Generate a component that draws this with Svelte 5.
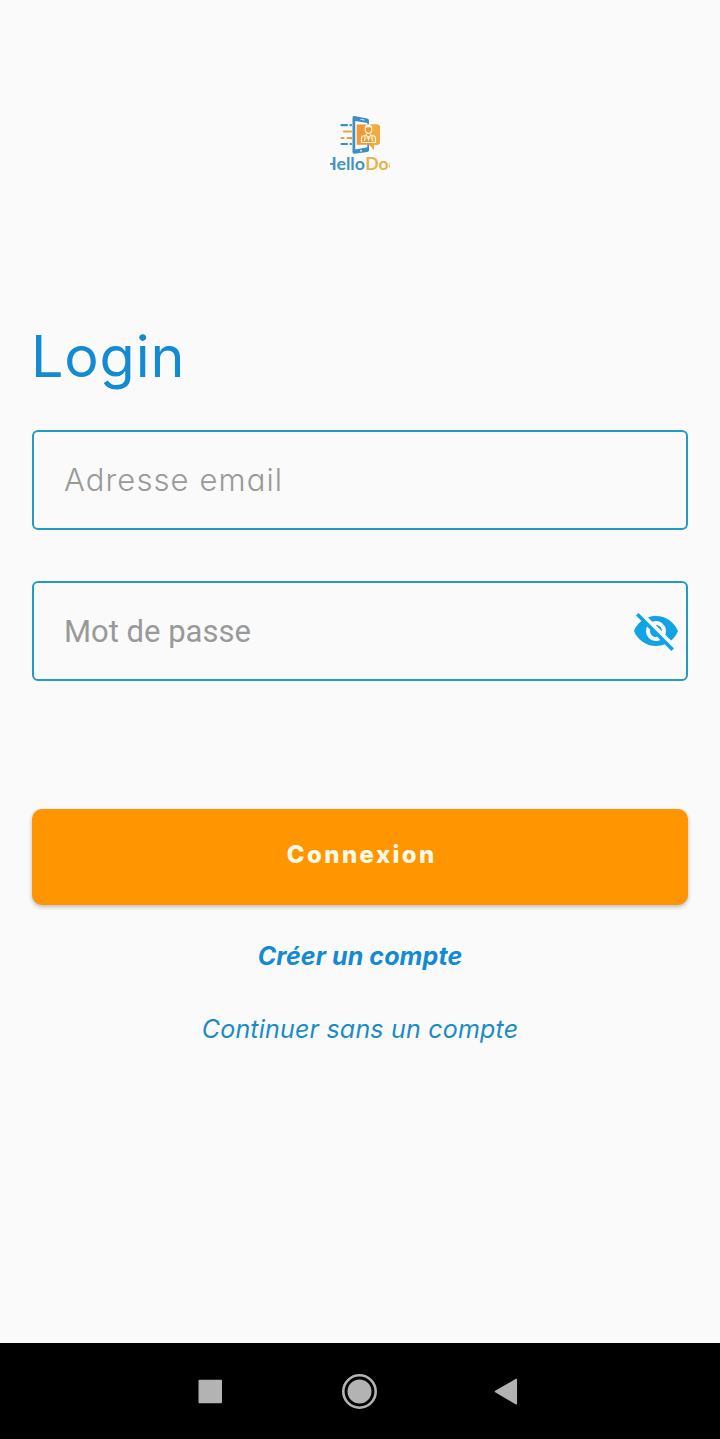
<script>
	let email = '';
	let password = '';
	let showPassword = false;

	function togglePassword() {
		showPassword = !showPassword;
	}
</script>

<div class="screen">
	<main>
		<svg class="logo" viewBox="0 0 60 60" role="img" aria-label="HelloDoc">
			<g stroke-width="2.2" stroke-linecap="round">
				<path d="M11.5 15.2h5.5M20.5 15.2h.5M11.5 34h5.5M20.5 34h.5M20.5 28.2h.5" stroke="#3d8fbd" />
				<path d="M14 21.5h7" stroke="#e3aa3c" />
				<path d="M11.5 28h2M17.5 28h3.5" stroke="#ee9b4a" />
			</g>
			<path d="M22.5 7.6Q22.5 5.8 24.5 6.1L37.2 8.5Q39 8.9 39 10.8V40.2Q39 41.7 37.2 42L24.5 43.8Q22.5 44 22.5 42Z" fill="#3c8fc1" />
			<path d="M25.2 11L37.3 13V37.3L25.2 39.5Z" fill="#fafafa" />
			<path d="M30.5 9.3l4 .8" stroke="#d7edf5" stroke-width="1" />
			<circle cx="31" cy="40.8" r="1" fill="#d7edf5" />
			<path d="M26.7 14.4H47Q49.8 14.4 49.8 17V31.8Q49.8 34.7 47 34.7H44V40L39.2 34.7H26.7Z" fill="#f2983c" />
			<path d="M44 14.4h3q2.8 0 2.8 2.6v14.8q0 2.9-2.8 2.9h-3V40l-3-3.4V14.4z" fill="#efad3d" />
			<g fill="none" stroke="#fff5d8" stroke-width="1.2">
				<path d="M35.3 18q0-3 3.2-3t3.2 3v2.5q-.7 3-3.2 3t-3.2-3z" />
				<path d="M31.5 32.5v-4q0-2.7 3-3l1.8-.7 2.2 5 2.2-5 1.8.7q3 .3 3 3v4zM35 26v3l-1 2M42 26v3l1 2M38.5 26v4" />
			</g>
			<path d="M35.2 18q-.5-3.6 3.3-3.6t3.3 3.6q-3-1.5-6.6 0z" fill="#fff5d8" />
			<text class="logo-text">
				<tspan class="hello" x="-7" y="59.6" textLength="42" lengthAdjust="spacingAndGlyphs">Hello</tspan><tspan class="doc" x="35.3" y="59.6" textLength="32" lengthAdjust="spacingAndGlyphs">Doc</tspan>
			</text>
		</svg>

		<h1>Login</h1>

		<form on:submit|preventDefault>
			<div class="field">
				<input class="email" type="email" placeholder="Adresse email" bind:value={email} />
			</div>

			<div class="field">
				{#if showPassword}
					<input type="text" placeholder="Mot de passe" bind:value={password} />
				{:else}
					<input type="password" placeholder="Mot de passe" bind:value={password} />
				{/if}
				<button class="eye" type="button" aria-label="Afficher le mot de passe" on:click={togglePassword}>
					<svg viewBox="0 0 24 24" width="48" height="48" fill="#11a3e6">
						<path d="M12 7c2.76 0 5 2.24 5 5 0 .65-.13 1.26-.36 1.83l2.92 2.92c1.51-1.26 2.7-2.89 3.43-4.75-1.73-4.39-6-7.5-11-7.5-1.4 0-2.74.25-3.98.7l2.16 2.16C10.74 7.13 11.35 7 12 7zM2 4.27l2.28 2.28.46.46C3.08 8.3 1.78 10.02 1 12c1.73 4.39 6 7.5 11 7.5 1.55 0 3.03-.3 4.38-.84l.42.42L19.73 22 21 20.73 3.27 3 2 4.27zM7.53 9.8l1.55 1.55c-.05.21-.08.43-.08.65 0 1.66 1.34 3 3 3 .22 0 .44-.03.65-.08l1.55 1.55c-.67.33-1.41.53-2.2.53-2.76 0-5-2.24-5-5 0-.79.2-1.53.53-2.2zm4.31-.78l3.15 3.15.02-.16c0-1.66-1.34-3-3-3l-.17.01z" />
					</svg>
				</button>
			</div>

			<button class="submit" type="submit">Connexion</button>
		</form>

		<button class="link create">Créer un compte</button>
		<button class="link guest">Continuer sans un compte</button>
	</main>

	<nav>
		<svg viewBox="0 0 720 96" width="720" height="96" fill="#b3b3b3">
			<rect x="198.5" y="36.8" width="23.5" height="23.4" rx="1" />
			<circle cx="359.5" cy="48.5" r="12" />
			<circle cx="359.5" cy="48.5" r="16.2" fill="none" stroke="#b3b3b3" stroke-width="2.6" />
			<path d="M495.5 48.5L516.3 36.5V60.8Z" stroke="#b3b3b3" stroke-width="1.5" stroke-linejoin="round" />
		</svg>
	</nav>
</div>

<style>
	:global(body) {
		margin: 0;
		background: #fafafa;
	}

	.screen {
		display: flex;
		flex-direction: column;
		width: 720px;
		height: 1439px;
		background: #fafafa;
		font-family: Inter, 'Open Sans', sans-serif;
		/* single-storey a */
		font-feature-settings: 'cv11';
	}

	main {
		flex: 1;
		display: flex;
		flex-direction: column;
		align-items: center;
		padding: 110px 32px 0;
	}

	.logo {
		flex: none;
		width: 60px;
		height: 60px;
		overflow: hidden;
	}

	.logo-text {
		font-family: Lato, sans-serif;
		font-size: 16.5px;
		font-weight: 700;
	}

	.hello {
		fill: #4295c0;
	}

	.doc {
		fill: #e9b04b;
	}

	h1 {
		align-self: flex-start;
		margin: 146px 0 0 -1px;
		font-size: 57.5px;
		line-height: 80px;
		font-weight: 400;
		letter-spacing: 0.8px;
		color: #148ad2;
	}

	form {
		display: flex;
		flex-direction: column;
		width: 100%;
		margin-top: 34px;
	}

	.field {
		display: flex;
		align-items: center;
		box-sizing: border-box;
		height: 100px;
		margin-bottom: 51px;
		padding: 0 6px 0 30px;
		border: 2px solid #219bc4;
		border-radius: 6px;
	}

	input {
		flex: 1;
		min-width: 0;
		height: 90px;
		padding: 0;
		border: none;
		outline: none;
		background: transparent;
		font-family: Roboto, sans-serif;
		font-size: 31px;
		color: #333;
	}

	input.email {
		font-family: Inter, sans-serif;
		font-feature-settings: 'cv11';
		font-size: 31px;
		font-weight: 300;
		letter-spacing: 1.1px;
		padding-bottom: 2px;
	}

	input::placeholder {
		color: #999;
		opacity: 1;
	}

	button {
		padding: 0;
		border: none;
		background: none;
		font-family: inherit;
		font-feature-settings: inherit;
		cursor: pointer;
	}

	.eye {
		display: flex;
	}

	.submit {
		height: 96px;
		margin-top: 77px;
		padding-bottom: 6px;
		border-radius: 10px;
		background: #ff9500;
		box-shadow: 0 2px 4px rgba(0, 0, 0, 0.25);
		font-size: 24px;
		font-weight: 800;
		letter-spacing: 2.4px;
		text-indent: 3.4px;
		color: #fffbea;
	}

	.link {
		line-height: 40px;
		font-size: 25px;
		font-style: italic;
		color: #148ad2;
	}

	.create {
		margin-top: 31px;
		font-weight: 700;
		letter-spacing: 0.1px;
	}

	.guest {
		margin-top: 33px;
		letter-spacing: 0.2px;
		color: #1b8cc5;
	}

	nav {
		display: flex;
		height: 96px;
		background: #000;
	}
</style>
